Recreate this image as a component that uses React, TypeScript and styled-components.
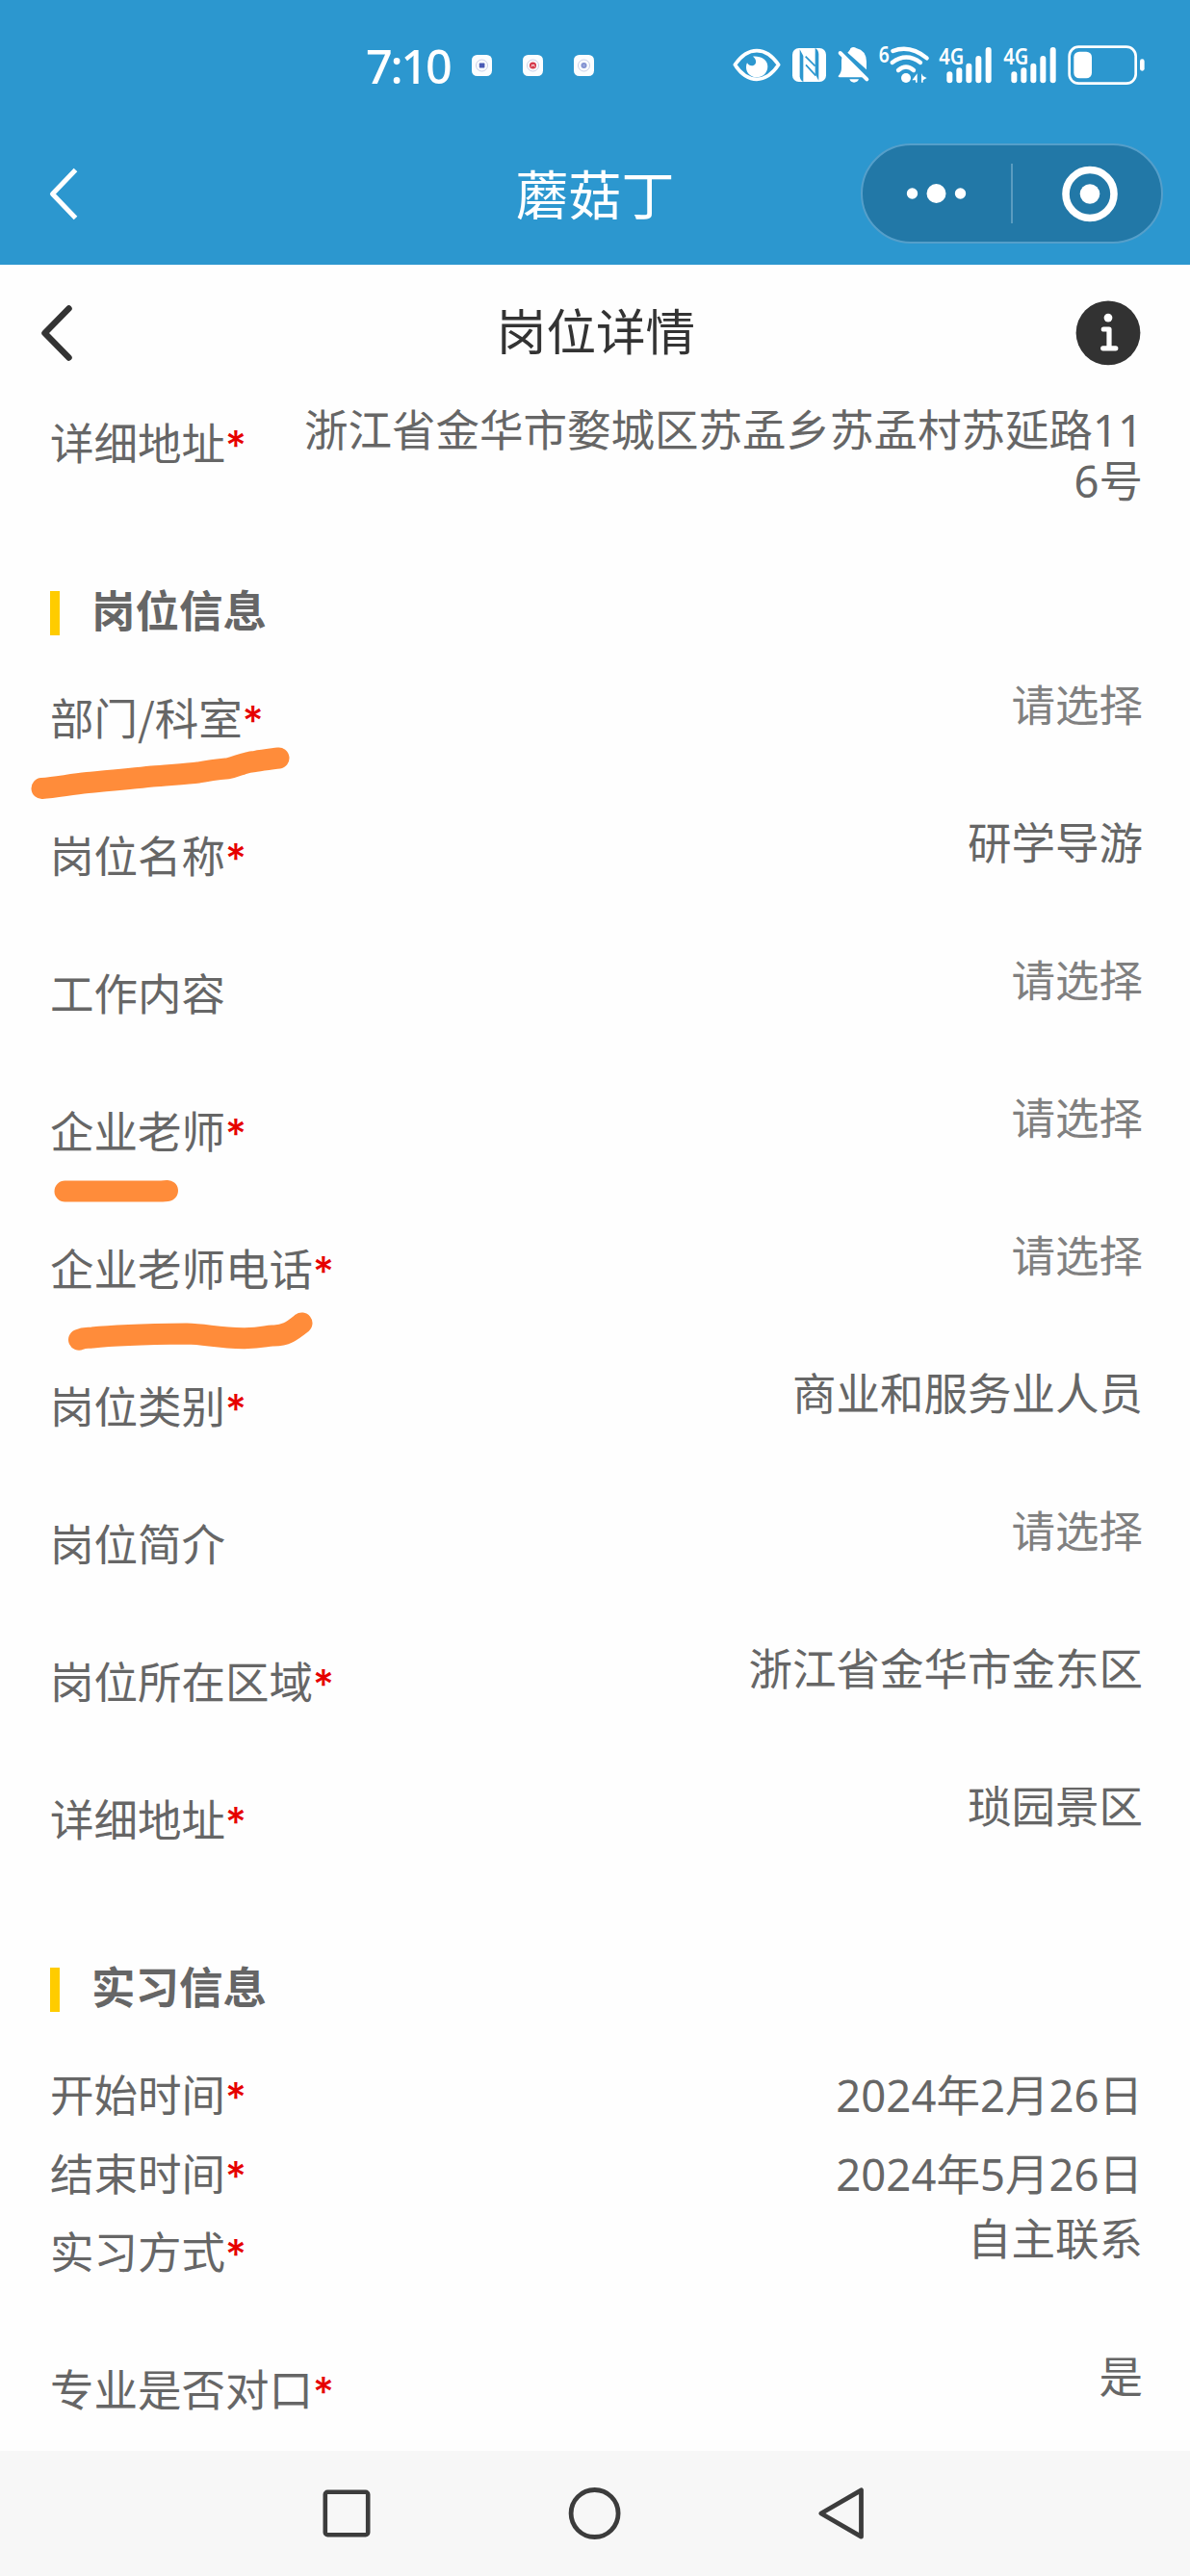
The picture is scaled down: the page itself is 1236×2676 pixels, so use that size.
import React from 'react';
import styled, { createGlobalStyle } from 'styled-components';

const GlobalStyle = createGlobalStyle`
  body { margin: 0; background: #fefefe; }
  * { box-sizing: border-box; }
  svg { display: block; flex: none; overflow: visible; }
`;

const cjk = `"Noto Sans CJK SC", sans-serif`;

const Screen = styled.div`
  position: relative;
  width: 1236px;
  height: 2676px;
  overflow: hidden;
  display: flex;
  flex-direction: column;
  background: #fefefe;
  font-family: ${cjk};
  color: #666;
`;

const TopArea = styled.header`
  height: 275px;
  flex: none;
  background: #2c97cf;
  color: #fff;
`;

const StatusBar = styled.div`
  height: 127px;
  padding: 9px 47px 0 380px;
  display: flex;
  align-items: center;
`;

const Clock = styled.span`
  font-family: "Noto Sans", sans-serif;
  font-size: 48.5px;
  font-weight: 500;
  letter-spacing: -2.2px;
  line-height: 60px;
  width: 110px;
`;

const NoticeApps = styled.div`
  display: flex;
  gap: 32px;
`;

const StatusIcons = styled.div`
  margin-left: auto;
  display: flex;
`;

const StatusIcon = styled.svg<{ $gap: number }>`
  margin-left: ${(p) => p.$gap}px;
`;

const AppBar = styled.div`
  height: 148px;
  display: grid;
  grid-template-columns: 1fr auto 1fr;
  align-items: center;
  padding: 0 28px 0 48px;
`;

const AppTitle = styled.h1`
  margin: 0;
  font-size: 55px;
  font-weight: 400;
  line-height: 70px;
  padding: 0 20px 5px 0;
`;

const Capsule = styled.div`
  justify-self: end;
  display: flex;
  align-items: center;
  width: 314px;
  height: 104px;
  border: 2px solid #559fca;
  border-radius: 52px;
  background: #2278a7;
`;

const CapsuleHalf = styled.div`
  flex: 1;
  display: flex;
  justify-content: center;
`;

const CapsuleDivider = styled.i`
  width: 2px;
  height: 62px;
  background: #5a9cc0;
`;

const PageBar = styled.div`
  height: 145px;
  flex: none;
  padding: 0 50px 6px 39px;
  display: grid;
  grid-template-columns: 1fr auto 1fr;
  align-items: center;
  color: #333;
  svg:last-child { justify-self: end; }
`;

const PageTitle = styled.h2`
  margin: 0;
  padding: 0 0 6px 13px;
  font-size: 51.6px;
  font-weight: 400;
  line-height: 60px;
`;

const Form = styled.main`
  flex: 1;
  min-height: 0;
  padding: 0 49px 0 52px;
  font-size: 45.5px;
  line-height: 53px;
`;

const Row = styled.div<{ $compact?: boolean }>`
  display: flex;
  justify-content: space-between;
  height: ${(p) => (p.$compact ? 81.5 : 143)}px;
  align-items: ${(p) => (p.$compact ? 'center' : 'flex-start')};
`;

const Label = styled.span<{ $compact?: boolean }>`
  flex: none;
  white-space: nowrap;
  margin-top: ${(p) => (p.$compact ? -4 : 12)}px;
`;

const Star = styled.span`
  color: #e60000;
  font-family: Inter, sans-serif;
  font-size: 42px;
  font-weight: 500;
  line-height: 0;
`;

const Value = styled.span<{ $empty?: boolean }>`
  max-width: 872px;
  text-align: right;
  word-break: break-all;
  font-family: "Noto Sans", ${cjk};
  color: ${(p) => (p.$empty ? '#808080' : '#666')};
`;

const SectionHead = styled.div`
  height: 143px;
  display: flex;
  align-items: center;
`;

const SectionBar = styled.i`
  width: 10px;
  height: 46px;
  margin: 5px 33px 0 0;
  background: #ffcc00;
`;

const SectionTitle = styled.h3`
  margin: 0;
  padding-bottom: 4px;
  font-size: 45.5px;
  font-weight: 700;
`;

const NavBar = styled.nav`
  height: 130px;
  flex: none;
  background: #f7f7f7;
  display: flex;
  justify-content: center;
  align-items: center;
  gap: 202px;
`;

const Marks = styled.svg`
  position: absolute;
  left: 0;
  top: 760px;
  pointer-events: none;
`;

type Field = { label: string; value?: string; required?: boolean; compact?: boolean };

const jobFields: Field[] = [
  { label: '部门/科室', required: true },
  { label: '岗位名称', value: '研学导游', required: true },
  { label: '工作内容' },
  { label: '企业老师', required: true },
  { label: '企业老师电话', required: true },
  { label: '岗位类别', value: '商业和服务业人员', required: true },
  { label: '岗位简介' },
  { label: '岗位所在区域', value: '浙江省金华市金东区', required: true },
  { label: '详细地址', value: '琐园景区', required: true },
];

const internFields: Field[] = [
  { label: '开始时间', value: '2024年2月26日', required: true, compact: true },
  { label: '结束时间', value: '2024年5月26日', required: true, compact: true },
  { label: '实习方式', value: '自主联系', required: true },
  { label: '专业是否对口', value: '是', required: true },
];

const FieldRow = ({ label, value, required, compact }: Field) => (
  <Row $compact={compact}>
    <Label $compact={compact}>
      {label}
      {required && <Star>*</Star>}
    </Label>
    <Value $empty={!value}>{value ?? '请选择'}</Value>
  </Row>
);

const Section = ({ title, fields }: { title: string; fields: Field[] }) => (
  <section>
    <SectionHead>
      <SectionBar />
      <SectionTitle>{title}</SectionTitle>
    </SectionHead>
    {fields.map((f) => (
      <FieldRow key={f.label} {...f} />
    ))}
  </section>
);

const AppBadge = ({ kind }: { kind: 'square' | 'red' | 'dots' }) => (
  <svg width="21" height="22" viewBox="0 0 21 22">
    <rect width="21" height="22" rx="5.5" fill="#fbfdff" />
    <circle cx="10.5" cy="11" r="6" fill="none" stroke="#c3c8e4" strokeWidth="0.9" />
    {kind === 'square' && <rect x="7.8" y="8.6" width="5.6" height="4.8" rx="0.6" fill="#4a5bb5" />}
    {kind === 'red' && (
      <>
        <circle cx="10.5" cy="11" r="3.6" fill="#d63a4c" />
        <path d="M8.8 12.6l1-2.6.8 1.4.8-1.4 1 2.6" fill="none" stroke="#fff" strokeWidth="0.7" />
      </>
    )}
    {kind === 'dots' && (
      <>
        <circle cx="10.5" cy="11" r="3" fill="#7f8fd0" />
        <path d="M9 9.6l3 2.8M12 9.6l-3 2.8" stroke="#c5cdec" strokeWidth="0.5" />
      </>
    )}
  </svg>
);

const Signal = ({ gap }: { gap: number }) => (
  <StatusIcon $gap={gap} width="56" height="48" viewBox="0 0 168 144" fill="#fff">
    <text x="1" y="68" fontFamily="Noto Sans, sans-serif" fontWeight="600" fontSize="70" textLength="78" lengthAdjust="spacingAndGlyphs">
      4G
    </text>
    <rect x="25" y="91" width="18" height="36" rx="9" />
    <rect x="55" y="79" width="18" height="48" rx="9" />
    <rect x="85" y="65" width="18" height="62" rx="9" />
    <rect x="115" y="42" width="18" height="85" rx="9" />
    <rect x="146" y="15" width="18" height="112" rx="9" />
  </StatusIcon>
);

export default function App() {
  return (
    <Screen>
      <GlobalStyle />
      <TopArea>
        <StatusBar>
          <Clock>7:10</Clock>
          <NoticeApps>
            <AppBadge kind="square" />
            <AppBadge kind="red" />
            <AppBadge kind="dots" />
          </NoticeApps>
          <StatusIcons>
            <StatusIcon $gap={0} width="50" height="48" viewBox="63 42 150 144">
              <path d="M70 112Q100 68 138 68Q176 68 206 112Q176 157 138 157Q100 157 70 112Z" fill="none" stroke="#fff" strokeWidth="11" strokeLinejoin="round" />
              <path d="M126 86C150 84 172 96 172 117C172 137 157 151 138 151C119 151 105 137 105 119C105 114 106 110 108 106C113 114 122 117 129 113C139 107 137 94 126 86Z" fill="#fff" />
            </StatusIcon>
            <StatusIcon $gap={11} width="37" height="48" viewBox="246 42 111 144">
              <rect x="249" y="60" width="105" height="105" rx="20" fill="#fff" />
              <path d="M272 64V148Q273 160 283 165V84Z" fill="#2c97cf" />
              <path d="M331 161V78Q330 65 320 60V140Z" fill="#2c97cf" />
              <path d="M290 86L320 116M291 112L322 146" stroke="#2c97cf" strokeWidth="5" />
            </StatusIcon>
            <StatusIcon $gap={10} width="35" height="48" viewBox="387 42 105 144">
              <path d="M425 70Q430 64 430 61Q439 53 448 60Q479 67 480 102V127L421 74Z" fill="#fff" />
              <path d="M404 84L470 151H397Q391 151 392 147Q402 136 402 122V98Z" fill="#fff" />
              <path d="M398 75L481 157" stroke="#fff" strokeWidth="12" strokeLinecap="round" />
              <path d="M427 157H456Q452 167 441 167Q431 167 427 157Z" fill="#fff" />
            </StatusIcon>
            <StatusIcon $gap={8} width="54" height="48" viewBox="516 42 162 144" fill="none" stroke="#fff" strokeWidth="13" strokeLinecap="round">
              <text x="518" y="106" fontFamily="Noto Sans, sans-serif" fontWeight="600" fontSize="68" textLength="33" lengthAdjust="spacingAndGlyphs" fill="#fff" stroke="none">
                6
              </text>
              <path d="M562 69Q615 48 668 91M560 105Q604 72 648 105M579 129Q603 108 627 129" />
              <circle cx="603" cy="153" r="15" fill="#fff" stroke="none" />
              <path d="M638 139V167H633V160H622ZM651 139V167H656V160L668 153L656 147Z" fill="#fff" stroke="none" />
            </StatusIcon>
            <Signal gap={9} />
            <Signal gap={11} />
            <StatusIcon $gap={11} width="80" height="48" viewBox="1107 42 240 144">
              <rect x="1112" y="56" width="207" height="114" rx="29" fill="none" stroke="#fff" strokeWidth="8" />
              <rect x="1126" y="71" width="56" height="83" rx="17" fill="#fff" />
              <rect x="1332" y="94" width="14" height="37" rx="7" fill="#fff" />
            </StatusIcon>
          </StatusIcons>
        </StatusBar>
        <AppBar>
          <svg width="36" height="60" viewBox="0 0 36 60" fill="none" stroke="#fff" strokeWidth="5" strokeLinecap="butt" strokeLinejoin="round">
            <path d="M30.5 5.5L6.5 30.5L30.5 55.5" />
          </svg>
          <AppTitle>蘑菇丁</AppTitle>
          <Capsule>
            <CapsuleHalf>
              <svg width="64" height="24" viewBox="0 0 64 24" fill="#fff">
                <circle cx="6.5" cy="12" r="5.7" />
                <circle cx="31.5" cy="12" r="10" />
                <circle cx="56.5" cy="12" r="5.7" />
              </svg>
            </CapsuleHalf>
            <CapsuleDivider />
            <CapsuleHalf>
              <svg width="60" height="60" viewBox="0 0 60 60" fill="none">
                <circle cx="33" cy="30.5" r="25" stroke="#fff" strokeWidth="7.6" />
                <circle cx="33" cy="30.5" r="10.3" fill="#fff" />
              </svg>
            </CapsuleHalf>
          </Capsule>
        </AppBar>
      </TopArea>

      <PageBar>
        <svg width="40" height="64" viewBox="0 0 40 64" fill="none" stroke="#333" strokeWidth="6.5" strokeLinecap="round" strokeLinejoin="round">
          <path d="M32.5 7.5L7.5 33L32.5 58.5" />
        </svg>
        <PageTitle>岗位详情</PageTitle>
        <svg width="70" height="70" viewBox="0 0 70 70">
          <circle cx="35" cy="35.8" r="33.4" fill="#323232" />
          <circle cx="35" cy="20.1" r="4.4" fill="#fff" />
          <path d="M30.3 32H36V51.8M29.7 51.8H42.8" fill="none" stroke="#fff" strokeWidth="5.2" strokeLinecap="round" strokeLinejoin="round" />
        </svg>
      </PageBar>

      <Form>
        <FieldRow label="详细地址" value="浙江省金华市婺城区苏孟乡苏孟村苏延路116号" required />
        <Section title="岗位信息" fields={jobFields} />
        <Section title="实习信息" fields={internFields} />
      </Form>

      <NavBar>
        <svg width="56" height="56" viewBox="0 0 56 56" fill="none" stroke="#3c3c3c" strokeWidth="4.6">
          <rect x="5.8" y="5.8" width="44.4" height="44.4" rx="2.5" />
        </svg>
        <svg width="56" height="56" viewBox="0 0 56 56" fill="none" stroke="#3c3c3c" strokeWidth="4.8">
          <circle cx="27.6" cy="28" r="24.5" />
        </svg>
        <svg width="56" height="56" viewBox="0 0 56 56" fill="none" stroke="#3c3c3c" strokeWidth="4.8" strokeLinejoin="round">
          <path d="M46.5 3.8V52.2L4.8 28Z" />
        </svg>
      </NavBar>

      <Marks width="400" height="660" viewBox="0 760 400 660" fill="none" stroke="#ff8c3a" strokeWidth="22" strokeLinecap="round" strokeLinejoin="round">
        <path d="M43.5 819C58 818 72 815 91 813C113 811 136 809 158 806.5C175 805 195 804 206 802.5C218 800 228 799 237 798.2C248 796 252 792 265 791C275 789 282 788.5 289.5 787.5" />
        <path d="M67.5 1237.5H168L174 1237" />
        <path d="M82 1391.7C88 1389 90 1390 96 1389.5C118 1387 155 1386 193.7 1385.5C215 1386 225 1390 253 1390.2C272 1390 275 1388 283 1387.5C297 1388 304 1382 313.5 1374.5" />
      </Marks>
    </Screen>
  );
}
